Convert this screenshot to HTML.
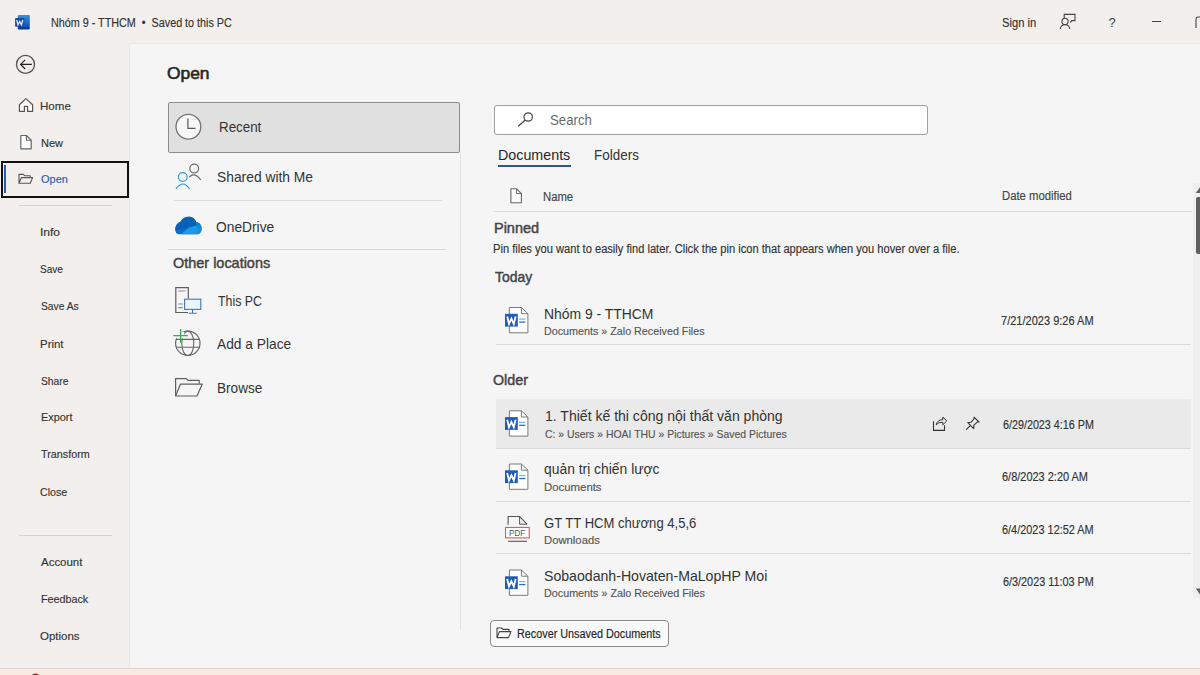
<!DOCTYPE html>
<html><head><meta charset="utf-8"><style>
html,body{margin:0;padding:0;}
body{width:1200px;height:675px;position:relative;overflow:hidden;background:#f3efec;font-family:"Liberation Sans",sans-serif;}
.t{position:absolute;white-space:nowrap;transform-origin:0 0;}
.a{position:absolute;}
</style></head><body>
<div class="a" style="left:0;top:0;width:1200px;height:44px;background:#f3efec"></div>
<div class="a" style="left:130px;top:44px;width:1070px;height:624px;background:#f5f5f5"></div>
<div class="a" style="left:129px;top:44px;width:1px;height:624px;background:#ebe7e4"></div>
<div class="a" style="left:129px;top:43px;width:1071px;height:1px;background:#ece9e6"></div>
<div class="a" style="left:0;top:668px;width:1200px;height:1px;background:#dcd5d0"></div>
<div class="a" style="left:0;top:669px;width:1200px;height:6px;background:#f9eae2"></div>
<div class="a" style="left:1px;top:161px;width:124px;height:33px;border:2px solid #111"></div>
<div class="a" style="left:4px;top:164.5px;width:2px;height:28.5px;background:#2b5cb5"></div>
<div class="a" style="left:19px;top:205px;width:93px;height:1px;background:#d6d2cf"></div>
<div class="a" style="left:19px;top:535px;width:93px;height:1px;background:#d6d2cf"></div>
<div class="a" style="left:168px;top:102px;width:289.5px;height:48.5px;background:#e0e0e0;border:1px solid #8c8c8c;border-radius:2px"></div>
<div class="a" style="left:174px;top:200px;width:268px;height:1px;background:#dcdcdc"></div>
<div class="a" style="left:168px;top:248.5px;width:278px;height:1px;background:#d8d8d8"></div>
<div class="a" style="left:460px;top:152px;width:1px;height:477px;background:#e0e0e0"></div>
<div class="a" style="left:494px;top:105px;width:432px;height:28px;background:#fff;border:1px solid #a0a0a0;border-radius:3px"></div>
<div class="a" style="left:497.6px;top:165px;width:73.4px;height:2px;background:#2b579a"></div>
<div class="a" style="left:494px;top:211px;width:698px;height:1px;background:#dadada"></div>
<div class="a" style="left:496px;top:344px;width:695px;height:1px;background:#dadada"></div>
<div class="a" style="left:496px;top:399px;width:695px;height:49px;background:#eaeaea"></div>
<div class="a" style="left:496px;top:448px;width:695px;height:1px;background:#dadada"></div>
<div class="a" style="left:496px;top:500.5px;width:695px;height:1px;background:#dadada"></div>
<div class="a" style="left:496px;top:553px;width:695px;height:1px;background:#dadada"></div>
<div class="a" style="left:1193px;top:183px;width:7px;height:415px;background:#eeeeee"></div>
<div class="a" style="left:1196px;top:197px;width:4px;height:57px;background:#5f5f5f;border-radius:2px 0 0 2px"></div>
<div class="a" style="left:489.5px;top:620px;width:177px;height:24.5px;background:#f9f9f9;border:1px solid #8a8a8a;border-radius:4px"></div>
<svg class="a" style="left:0;top:0" width="1200" height="675" viewBox="0 0 1200 675">
<defs>
<linearGradient id="wg" x1="0" y1="0" x2="0" y2="1"><stop offset="0" stop-color="#3391e0"/><stop offset="0.5" stop-color="#2169c8"/><stop offset="0.82" stop-color="#1852b0"/><stop offset="0.83" stop-color="#0f3b8c"/><stop offset="1" stop-color="#0f3b8c"/></linearGradient>
<linearGradient id="od1" x1="0" y1="0" x2="0" y2="1"><stop offset="0" stop-color="#0364b8"/><stop offset="1" stop-color="#0078d4"/></linearGradient>
</defs>
<!-- word logo -->
<rect x="17.8" y="14.9" width="12" height="14.7" rx="1" fill="url(#wg)"/>
<rect x="15.1" y="18" width="9.3" height="8.7" rx="0.8" fill="#1b4c9c"/>
<path d="M16.7,20 L18,24.8 L19.75,21.5 L21.5,24.8 L22.8,20" fill="none" stroke="#e4ecf8" stroke-width="1.3"/>
<!-- back -->
<circle cx="25.5" cy="64.4" r="9" fill="none" stroke="#505050" stroke-width="1.3"/>
<path d="M31.8,64.4 H20.6 M25.2,59.8 L20.6,64.4 L25.2,69" fill="none" stroke="#222" stroke-width="1.2"/>
<!-- home -->
<path d="M19.4,104.8 L25.9,98.6 L32.6,104.8 V111.4 H27.6 V106.4 H24.4 V111.4 H19.4 Z" fill="#fff" stroke="#555" stroke-width="1.2" stroke-linejoin="round"/>
<!-- new -->
<path d="M20.8,135.5 H26.4 L31.2,140.2 V148.8 H20.8 Z" fill="#fff" stroke="#666" stroke-width="1.2" stroke-linejoin="round"/>
<path d="M26.4,135.5 V140.2 H31.2" fill="none" stroke="#666" stroke-width="1.1"/>
<!-- open folder nav -->
<path d="M19,183.2 V174.4 H23.3 L24.6,175.7 H30.2 V177.6 M19,183.2 L21.3,177.6 H32.6 L30.3,183.2 Z" fill="none" stroke="#555" stroke-width="1.1" stroke-linejoin="round"/>
<!-- clock -->
<circle cx="188.4" cy="126.7" r="12.4" fill="#f7f7f7" stroke="#747474" stroke-width="1.3"/>
<path d="M187.9,118.6 V128.3 H195.6" fill="none" stroke="#5a5a5a" stroke-width="1.2"/>
<!-- shared -->
<circle cx="194.2" cy="168.6" r="4.4" fill="none" stroke="#6a6a6a" stroke-width="1.2"/>
<path d="M189.3,177 Q194.5,171.5 200.8,179.8" fill="none" stroke="#6a6a6a" stroke-width="1.2"/>
<circle cx="182.8" cy="177" r="4.4" fill="none" stroke="#3a9ad6" stroke-width="1.2"/>
<path d="M176,189 Q182.8,179 189.6,189" fill="none" stroke="#3a9ad6" stroke-width="1.2"/>
<!-- onedrive -->
<clipPath id="odc"><path d="M178.3,234.2 C176.4,234.2 175.3,232 175.3,229.6 C175.3,225.6 177.6,222.3 180.7,221.7 C182.2,218.6 185.2,216.8 188.6,216.8 C192.3,216.8 195.2,219 196.3,222.3 C199.6,222.6 201.6,225.4 201.6,228.6 C201.6,232 199.8,234.2 197.3,234.2 Z"/></clipPath>
<g clip-path="url(#odc)">
<rect x="174" y="216" width="29" height="20" fill="#0f6fc6"/>
<path d="M174,216 H203 V224 L188,228 L174,231 Z" fill="#0762b7"/>
<path d="M179,236 L189,227.5 L196,225.5 L203,226 V236 Z" fill="#1c98e4"/>
<path d="M196,222 L203,224 V236 H198 Z" fill="#1488dc" opacity="0.7"/>
</g>
<!-- this pc -->
<path d="M188.3,298.5 V287.6 H175.8 V312.5 H188" fill="none" stroke="#5f5f5f" stroke-width="1.2"/>
<path d="M178.2,291 H185.5 M178.2,304 H182.7 M178.2,307.6 H182.7" stroke="#8a8a8a" stroke-width="1.1"/>
<rect x="184.6" y="299.2" width="16.2" height="10.2" fill="#eaf5fd" stroke="#3b78bb" stroke-width="1.1"/>
<path d="M192.5,309.6 V313.2 M188.6,313.2 H196.7" stroke="#3b78bb" stroke-width="1.1"/>
<!-- globe -->
<circle cx="187.8" cy="343.3" r="12.2" fill="none" stroke="#666" stroke-width="1.2"/>
<ellipse cx="187.8" cy="343.3" rx="6" ry="12.2" fill="none" stroke="#666" stroke-width="1.1"/>
<path d="M176,339.4 H199.6 M176,347.2 H199.6" stroke="#666" stroke-width="1.1"/>
<rect x="176.3" y="331.8" width="8" height="6.6" fill="#f5f5f5"/>
<path d="M173.3,335.6 H187.8 M180.6,328.9 V342.8" stroke="#3aa757" stroke-width="1.3"/>
<!-- browse folder -->
<path d="M175.6,396 V378.6 H186.4 L188.1,380.3 H199.2 V383.8" fill="none" stroke="#5f5f5f" stroke-width="1.2" stroke-linejoin="round"/>
<path d="M175.6,396 L180.4,384.2 H202.2 L197,396 Z" fill="none" stroke="#5f5f5f" stroke-width="1.2" stroke-linejoin="round"/>
<!-- search -->
<circle cx="528.2" cy="117" r="4.2" fill="none" stroke="#444" stroke-width="1.2"/>
<path d="M525.1,120.2 L518.2,126.2" stroke="#444" stroke-width="1.3"/>
<!-- name doc -->
<path d="M510.9,188.8 H516.6 L521.4,193.6 V202.7 H510.9 Z" fill="#fff" stroke="#666" stroke-width="1.1" stroke-linejoin="round"/>
<path d="M516.6,188.8 V193.6 H521.4" fill="none" stroke="#666" stroke-width="1"/>
<g transform="translate(505,307)">
<path d="M4.4,0.5 H16.4 L22.9,6.7 V25.8 H4.4 Z" fill="#fff" stroke="#7a7a7a" stroke-width="1"/>
<path d="M16.4,0.5 V6.7 H22.9" fill="none" stroke="#7a7a7a" stroke-width="1"/>
<rect x="0" y="6.8" width="12.8" height="12.8" fill="#1f5bb8"/>
<path d="M2.2,9.5 L4,16.9 L6.4,11.6 L8.8,16.9 L10.6,9.5" fill="none" stroke="#fff" stroke-width="1.8" stroke-linejoin="miter"/>
<rect x="14.2" y="11.4" width="6.2" height="1.3" fill="#7fb2e5"/>
<rect x="14.2" y="14.4" width="6.2" height="1.3" fill="#2f6cc0"/>
</g>
<g transform="translate(505,410.3)">
<path d="M4.4,0.5 H16.4 L22.9,6.7 V25.8 H4.4 Z" fill="#fff" stroke="#7a7a7a" stroke-width="1"/>
<path d="M16.4,0.5 V6.7 H22.9" fill="none" stroke="#7a7a7a" stroke-width="1"/>
<rect x="0" y="6.8" width="12.8" height="12.8" fill="#1f5bb8"/>
<path d="M2.2,9.5 L4,16.9 L6.4,11.6 L8.8,16.9 L10.6,9.5" fill="none" stroke="#fff" stroke-width="1.8" stroke-linejoin="miter"/>
<rect x="14.2" y="11.4" width="6.2" height="1.3" fill="#7fb2e5"/>
<rect x="14.2" y="14.4" width="6.2" height="1.3" fill="#2f6cc0"/>
</g>
<g transform="translate(505,463.5)">
<path d="M4.4,0.5 H16.4 L22.9,6.7 V25.8 H4.4 Z" fill="#fff" stroke="#7a7a7a" stroke-width="1"/>
<path d="M16.4,0.5 V6.7 H22.9" fill="none" stroke="#7a7a7a" stroke-width="1"/>
<rect x="0" y="6.8" width="12.8" height="12.8" fill="#1f5bb8"/>
<path d="M2.2,9.5 L4,16.9 L6.4,11.6 L8.8,16.9 L10.6,9.5" fill="none" stroke="#fff" stroke-width="1.8" stroke-linejoin="miter"/>
<rect x="14.2" y="11.4" width="6.2" height="1.3" fill="#7fb2e5"/>
<rect x="14.2" y="14.4" width="6.2" height="1.3" fill="#2f6cc0"/>
</g>
<g transform="translate(505,569.5)">
<path d="M4.4,0.5 H16.4 L22.9,6.7 V25.8 H4.4 Z" fill="#fff" stroke="#7a7a7a" stroke-width="1"/>
<path d="M16.4,0.5 V6.7 H22.9" fill="none" stroke="#7a7a7a" stroke-width="1"/>
<rect x="0" y="6.8" width="12.8" height="12.8" fill="#1f5bb8"/>
<path d="M2.2,9.5 L4,16.9 L6.4,11.6 L8.8,16.9 L10.6,9.5" fill="none" stroke="#fff" stroke-width="1.8" stroke-linejoin="miter"/>
<rect x="14.2" y="11.4" width="6.2" height="1.3" fill="#7fb2e5"/>
<rect x="14.2" y="14.4" width="6.2" height="1.3" fill="#2f6cc0"/>
</g>
<!-- pdf -->
<path d="M508.1,524.8 V516.5 H519.6 L527,524.2" fill="none" stroke="#555" stroke-width="1.1"/>
<path d="M519.6,516.5 V524.2 H527" fill="none" stroke="#555" stroke-width="1"/>
<rect x="505.6" y="527.4" width="23.6" height="10.5" fill="#fff" stroke="#c9534f" stroke-width="1"/>
<path d="M508,541.3 H527" stroke="#555" stroke-width="1.1"/>
<!-- share -->
<path d="M933.5,421.3 V430.4 H944.5 V425.3" fill="none" stroke="#333" stroke-width="1.1"/>
<path d="M936.2,424.8 Q937.5,419.5 942.8,419.8 V417 L946.7,421 L942.8,424.8 V422.3 Q938.5,421.8 936.2,424.8 Z" fill="none" stroke="#333" stroke-width="1"/>
<!-- pin -->
<path d="M966.2,429.7 L970.3,425.6" stroke="#333" stroke-width="1.1"/>
<path d="M967.8,422.6 L971,422.3 L974.3,418.5 L974,417.2 L979,422 L977.6,421.9 L973.9,425.1 L973.7,428.6 Z" fill="none" stroke="#333" stroke-width="1.1" stroke-linejoin="round"/>
<!-- recover folder -->
<path d="M497,637.6 V628 H501.6 L503,629.4 H509 V631.6 M497,637.6 L499.5,631.6 H511 L508.5,637.6 Z" fill="none" stroke="#444" stroke-width="1.1" stroke-linejoin="round"/>
<path d="M1195.8,193 L1200,187.2 V193 Z" fill="#606060"/>
<path d="M1195.8,588.5 L1200,594.5 V588.5 Z" fill="#606060"/>
<ellipse cx="35.5" cy="676" rx="3.6" ry="2.6" fill="#a3272b"/>
<!-- title bar icons -->
<circle cx="1065" cy="21.4" r="3.1" fill="none" stroke="#444" stroke-width="1.1"/>
<path d="M1060.3,29 C1060.5,26 1062.5,24.8 1065,24.8 C1067.5,24.8 1069.5,26 1069.8,29" fill="none" stroke="#444" stroke-width="1.1"/>
<path d="M1064.2,18 V14.4 H1075 V20.6 H1071.5 L1070.3,22.6" fill="none" stroke="#444" stroke-width="1.1"/>
<path d="M1152,21.5 H1161" stroke="#444" stroke-width="1"/>
<path d="M1196,28 V19 Q1196,17 1198,17 H1200" fill="none" stroke="#444" stroke-width="1.1"/>
</svg>
<div class="t" style="left:1108.6px;top:16px;font-size:13px;line-height:13px;color:#444">?</div>
<div class="t" style="left:509px;top:528.4px;font-size:9.6px;line-height:9.6px;color:#555;transform:scaleX(0.84)">PDF</div>
<div class="t" style="left:51.34px;top:16.80px;font-size:12px;line-height:12px;color:#333;font-weight:400;transform:scaleX(0.8980);-webkit-text-stroke:0.15px currentColor;">Nhóm 9 - TTHCM&nbsp; •&nbsp; Saved to this PC</div>
<div class="t" style="left:1001.87px;top:16.90px;font-size:12px;line-height:12px;color:#333;font-weight:400;transform:scaleX(0.9316);-webkit-text-stroke:0.15px currentColor;">Sign in</div>
<div class="t" style="left:40.42px;top:101.02px;font-size:11.5px;line-height:11.5px;color:#333;font-weight:400;transform:scaleX(1.0059);-webkit-text-stroke:0.15px currentColor;">Home</div>
<div class="t" style="left:40.52px;top:137.82px;font-size:11.5px;line-height:11.5px;color:#333;font-weight:400;transform:scaleX(0.9577);-webkit-text-stroke:0.15px currentColor;">New</div>
<div class="t" style="left:41.03px;top:173.92px;font-size:11.5px;line-height:11.5px;color:#2b5cb5;font-weight:400;transform:scaleX(0.9537);-webkit-text-stroke:0.15px currentColor;">Open</div>
<div class="t" style="left:40.49px;top:226.53px;font-size:11.5px;line-height:11.5px;color:#333;font-weight:400;transform:scaleX(1.0455);-webkit-text-stroke:0.15px currentColor;">Info</div>
<div class="t" style="left:40.29px;top:264.33px;font-size:11.5px;line-height:11.5px;color:#333;font-weight:400;transform:scaleX(0.8712);-webkit-text-stroke:0.15px currentColor;">Save</div>
<div class="t" style="left:40.70px;top:301.43px;font-size:11.5px;line-height:11.5px;color:#333;font-weight:400;transform:scaleX(0.8936);-webkit-text-stroke:0.15px currentColor;">Save As</div>
<div class="t" style="left:40.25px;top:338.73px;font-size:11.5px;line-height:11.5px;color:#333;font-weight:400;transform:scaleX(0.9948);-webkit-text-stroke:0.15px currentColor;">Print</div>
<div class="t" style="left:40.62px;top:375.83px;font-size:11.5px;line-height:11.5px;color:#333;font-weight:400;transform:scaleX(0.8963);-webkit-text-stroke:0.15px currentColor;">Share</div>
<div class="t" style="left:40.60px;top:412.33px;font-size:11.5px;line-height:11.5px;color:#333;font-weight:400;transform:scaleX(0.9471);-webkit-text-stroke:0.15px currentColor;">Export</div>
<div class="t" style="left:40.65px;top:448.73px;font-size:11.5px;line-height:11.5px;color:#333;font-weight:400;transform:scaleX(0.9392);-webkit-text-stroke:0.15px currentColor;">Transform</div>
<div class="t" style="left:40.35px;top:486.73px;font-size:11.5px;line-height:11.5px;color:#333;font-weight:400;transform:scaleX(0.9276);-webkit-text-stroke:0.15px currentColor;">Close</div>
<div class="t" style="left:41.48px;top:556.73px;font-size:11.5px;line-height:11.5px;color:#333;font-weight:400;transform:scaleX(0.9972);-webkit-text-stroke:0.15px currentColor;">Account</div>
<div class="t" style="left:40.61px;top:593.83px;font-size:11.5px;line-height:11.5px;color:#333;font-weight:400;transform:scaleX(0.9344);-webkit-text-stroke:0.15px currentColor;">Feedback</div>
<div class="t" style="left:40.32px;top:631.23px;font-size:11.5px;line-height:11.5px;color:#333;font-weight:400;transform:scaleX(0.9972);-webkit-text-stroke:0.15px currentColor;">Options</div>
<div class="t" style="left:167.08px;top:65.45px;font-size:17px;line-height:17px;color:#262626;font-weight:400;transform:scaleX(1.0216);-webkit-text-stroke:0.6px currentColor;">Open</div>
<div class="t" style="left:218.59px;top:119.15px;font-size:15px;line-height:15px;color:#333;font-weight:400;transform:scaleX(0.8906);">Recent</div>
<div class="t" style="left:216.56px;top:168.95px;font-size:15px;line-height:15px;color:#333;font-weight:400;transform:scaleX(0.9217);">Shared with Me</div>
<div class="t" style="left:216.23px;top:218.95px;font-size:15px;line-height:15px;color:#333;font-weight:400;transform:scaleX(0.9195);">OneDrive</div>
<div class="t" style="left:173.32px;top:256.18px;font-size:14.5px;line-height:14.5px;color:#444;font-weight:400;transform:scaleX(0.9961);-webkit-text-stroke:0.45px currentColor;">Other locations</div>
<div class="t" style="left:217.66px;top:293.05px;font-size:15px;line-height:15px;color:#333;font-weight:400;transform:scaleX(0.8223);">This PC</div>
<div class="t" style="left:216.92px;top:335.65px;font-size:15px;line-height:15px;color:#333;font-weight:400;transform:scaleX(0.9171);">Add a Place</div>
<div class="t" style="left:216.67px;top:380.25px;font-size:15px;line-height:15px;color:#333;font-weight:400;transform:scaleX(0.9068);">Browse</div>
<div class="t" style="left:549.90px;top:113.10px;font-size:14px;line-height:14px;color:#6b6b6b;font-weight:400;transform:scaleX(0.9443);">Search</div>
<div class="t" style="left:498.02px;top:147.25px;font-size:15px;line-height:15px;color:#262626;font-weight:400;transform:scaleX(0.9523);">Documents</div>
<div class="t" style="left:594.48px;top:146.75px;font-size:15px;line-height:15px;color:#333;font-weight:400;transform:scaleX(0.8969);">Folders</div>
<div class="t" style="left:542.91px;top:190.50px;font-size:12px;line-height:12px;color:#444;font-weight:400;transform:scaleX(0.9422);-webkit-text-stroke:0.15px currentColor;">Name</div>
<div class="t" style="left:1002.14px;top:190.30px;font-size:12px;line-height:12px;color:#444;font-weight:400;transform:scaleX(0.9431);-webkit-text-stroke:0.15px currentColor;">Date modified</div>
<div class="t" style="left:493.52px;top:220.68px;font-size:14.5px;line-height:14.5px;color:#444;font-weight:400;transform:scaleX(0.9981);-webkit-text-stroke:0.45px currentColor;">Pinned</div>
<div class="t" style="left:493.42px;top:242.90px;font-size:12px;line-height:12px;color:#333;font-weight:400;transform:scaleX(0.9263);-webkit-text-stroke:0.15px currentColor;">Pin files you want to easily find later. Click the pin icon that appears when you hover over a file.</div>
<div class="t" style="left:494.70px;top:269.68px;font-size:14.5px;line-height:14.5px;color:#444;font-weight:400;transform:scaleX(0.9586);-webkit-text-stroke:0.45px currentColor;">Today</div>
<div class="t" style="left:493.32px;top:372.93px;font-size:14.5px;line-height:14.5px;color:#444;font-weight:400;transform:scaleX(0.9840);-webkit-text-stroke:0.45px currentColor;">Older</div>
<div class="t" style="left:544.23px;top:305.85px;font-size:15px;line-height:15px;color:#333;font-weight:400;transform:scaleX(0.9270);">Nhóm 9 - TTHCM</div>
<div class="t" style="left:544.41px;top:326.23px;font-size:11.5px;line-height:11.5px;color:#555;font-weight:400;transform:scaleX(0.9337);-webkit-text-stroke:0.15px currentColor;">Documents » Zalo Received Files</div>
<div class="t" style="left:1001.18px;top:315.27px;font-size:12.5px;line-height:12.5px;color:#333;font-weight:400;transform:scaleX(0.8827);-webkit-text-stroke:0.15px currentColor;">7/21/2023 9:26 AM</div>
<div class="t" style="left:544.59px;top:407.65px;font-size:15px;line-height:15px;color:#333;font-weight:400;transform:scaleX(0.9353);">1. Thiết kế thi công nội thất văn phòng</div>
<div class="t" style="left:545.35px;top:429.23px;font-size:11.5px;line-height:11.5px;color:#555;font-weight:400;transform:scaleX(0.9076);-webkit-text-stroke:0.15px currentColor;">C: » Users » HOAI THU » Pictures » Saved Pictures</div>
<div class="t" style="left:1002.60px;top:418.98px;font-size:12.5px;line-height:12.5px;color:#333;font-weight:400;transform:scaleX(0.8600);-webkit-text-stroke:0.15px currentColor;">6/29/2023 4:16 PM</div>
<div class="t" style="left:544.13px;top:460.75px;font-size:15px;line-height:15px;color:#333;font-weight:400;transform:scaleX(0.9248);">quản trị chiến lược</div>
<div class="t" style="left:544.10px;top:482.43px;font-size:11.5px;line-height:11.5px;color:#555;font-weight:400;transform:scaleX(0.9896);-webkit-text-stroke:0.15px currentColor;">Documents</div>
<div class="t" style="left:1002.14px;top:471.27px;font-size:12.5px;line-height:12.5px;color:#333;font-weight:400;transform:scaleX(0.8776);-webkit-text-stroke:0.15px currentColor;">6/8/2023 2:20 AM</div>
<div class="t" style="left:543.84px;top:515.25px;font-size:15px;line-height:15px;color:#333;font-weight:400;transform:scaleX(0.8707);">GT TT HCM chương 4,5,6</div>
<div class="t" style="left:544.10px;top:535.23px;font-size:11.5px;line-height:11.5px;color:#555;font-weight:400;transform:scaleX(0.9811);-webkit-text-stroke:0.15px currentColor;">Downloads</div>
<div class="t" style="left:1002.32px;top:524.27px;font-size:12.5px;line-height:12.5px;color:#333;font-weight:400;transform:scaleX(0.8738);-webkit-text-stroke:0.15px currentColor;">6/4/2023 12:52 AM</div>
<div class="t" style="left:544.07px;top:568.05px;font-size:15px;line-height:15px;color:#333;font-weight:400;transform:scaleX(0.9406);">Sobaodanh-Hovaten-MaLopHP Moi</div>
<div class="t" style="left:543.56px;top:588.33px;font-size:11.5px;line-height:11.5px;color:#555;font-weight:400;transform:scaleX(0.9361);-webkit-text-stroke:0.15px currentColor;">Documents » Zalo Received Files</div>
<div class="t" style="left:1002.59px;top:575.88px;font-size:12.5px;line-height:12.5px;color:#333;font-weight:400;transform:scaleX(0.8671);-webkit-text-stroke:0.15px currentColor;">6/3/2023 11:03 PM</div>
<div class="t" style="left:516.53px;top:627.70px;font-size:12px;line-height:12px;color:#262626;font-weight:400;transform:scaleX(0.9014);-webkit-text-stroke:0.15px currentColor;">Recover Unsaved Documents</div>
</body></html>
